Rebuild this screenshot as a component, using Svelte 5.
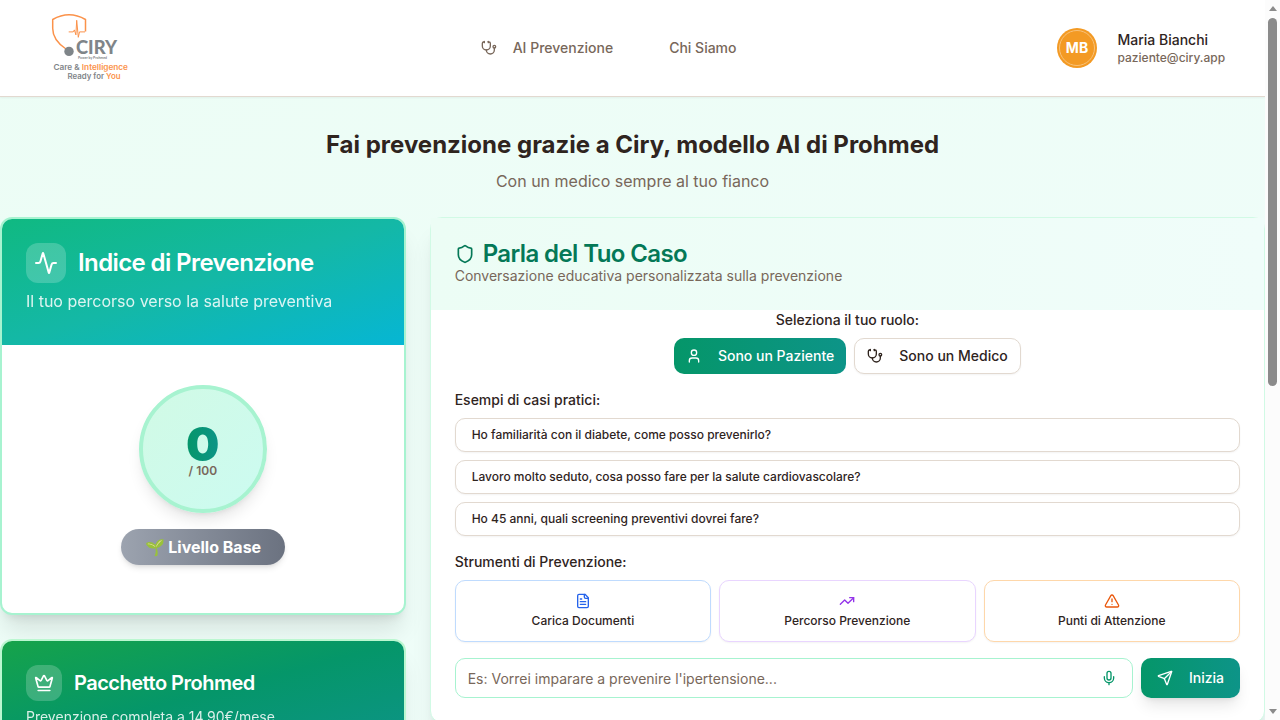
<script>
  const cases = [
    'Ho familiarità con il diabete, come posso prevenirlo?',
    'Lavoro molto seduto, cosa posso fare per la salute cardiovascolare?',
    'Ho 45 anni, quali screening preventivi dovrei fare?'
  ];
  const icons = {
    stethoscope: ['M11 2v2', 'M5 2v2', 'M5 3H4a2 2 0 0 0-2 2v4a6 6 0 0 0 12 0V5a2 2 0 0 0-2-2h-1', 'M8 15a6 6 0 0 0 12 0v-3', 'M22 10a2 2 0 1 1-4 0a2 2 0 1 1 4 0'],
    activity: ['M22 12h-2.48a2 2 0 0 0-1.93 1.46l-2.35 8.36a.25.25 0 0 1-.48 0L9.24 2.18a.25.25 0 0 0-.48 0l-2.35 8.36A2 2 0 0 1 4.49 12H2'],
    crown: ['M11.562 3.266a.5.5 0 0 1 .876 0L15.39 8.87a1 1 0 0 0 1.516.294L21.183 5.5a.5.5 0 0 1 .798.519l-2.834 10.246a1 1 0 0 1-.956.734H5.81a1 1 0 0 1-.957-.734L2.02 6.02a.5.5 0 0 1 .798-.519l4.276 3.664a1 1 0 0 0 1.516-.294z', 'M5 21h14'],
    shield: ['M20 13c0 5-3.5 7.5-7.66 8.95a1 1 0 0 1-.67-.01C7.5 20.5 4 18 4 13V6a1 1 0 0 1 1-1c2 0 4.5-1.2 6.24-2.72a1.17 1.17 0 0 1 1.52 0C14.51 3.81 17 5 19 5a1 1 0 0 1 1 1z'],
    user: ['M19 21v-2a4 4 0 0 0-4-4H9a4 4 0 0 0-4 4v2', 'M16 7a4 4 0 1 1-8 0a4 4 0 1 1 8 0'],
    file: ['M15 2H6a2 2 0 0 0-2 2v16a2 2 0 0 0 2 2h12a2 2 0 0 0 2-2V7Z', 'M14 2v4a2 2 0 0 0 2 2h4', 'M10 9H8', 'M16 13H8', 'M16 17H8'],
    trend: ['M22 7 13.5 15.5 8.5 10.5 2 17', 'M16 7h6v6'],
    alert: ['m21.73 18-8-14a2 2 0 0 0-3.48 0l-8 14A2 2 0 0 0 4 21h16a2 2 0 0 0 1.73-3', 'M12 9v4', 'M12 17h.01'],
    mic: ['M12 2a3 3 0 0 0-3 3v7a3 3 0 0 0 6 0V5a3 3 0 0 0-3-3Z', 'M19 10v2a7 7 0 0 1-14 0v-2', 'M12 19v3'],
    send: ['M14.536 21.686a.5.5 0 0 0 .937-.024l6.5-19a.496.496 0 0 0-.635-.635l-19 6.5a.5.5 0 0 0-.024.937l7.93 3.18a2 2 0 0 1 1.112 1.11z', 'm21.854 2.147-10.94 10.939']
  };
  const tools = [
    { icon: 'file', label: 'Carica Documenti', tone: 'blue' },
    { icon: 'trend', label: 'Percorso Prevenzione', tone: 'purple' },
    { icon: 'alert', label: 'Punti di Attenzione', tone: 'orange' }
  ];
</script>

{#snippet icon(name, size)}
  <svg class="icon" width={size} height={size} viewBox="0 0 24 24" aria-hidden="true">
    {#each icons[name] as d}<path {d} />{/each}
  </svg>
{/snippet}

<div class="window">
  <div class="page">
    <header class="topbar">
      <svg class="logo" width="82" height="72" viewBox="0 0 82 72" role="img" aria-label="Ciry">
        <path class="outline" d="M18 37C10.500 32 4.700 25.500 4.700 16.500V7.500Q21 -1.800 37.500 7.500V19.500" />
        <path class="pulse" d="M20.700 19.900h4.500l1.200-2 1.500 5L28.700 8.300 30.300 25.300 31.500 19.900h5.500" />
        <circle cx="21" cy="39.400" r="4.700" />
        <text class="brand" x="28" y="42" textLength="41" lengthAdjust="spacingAndGlyphs">CIRY</text>
        <text class="tiny" x="30" y="47" textLength="29" lengthAdjust="spacingAndGlyphs">Power by Prohmed</text>
        <text class="tag" x="5.500" y="57.500" textLength="74.500" lengthAdjust="spacingAndGlyphs">Care &amp; <tspan>Intelligence</tspan></text>
        <text class="tag" x="19.500" y="67" textLength="53" lengthAdjust="spacingAndGlyphs">Ready for <tspan>You</tspan></text>
      </svg>
      <nav>
        <a href="#ai">{@render icon('stethoscope', 16)}AI Prevenzione</a>
        <a href="#chi">Chi Siamo</a>
      </nav>
      <div class="account">
        <div class="avatar"><span>MB</span></div>
        <div class="who">
          <b>Maria Bianchi</b>
          <span>paziente@ciry.app</span>
        </div>
      </div>
    </header>

    <section class="hero">
      <h1>Fai prevenzione grazie a Ciry, modello AI di Prohmed</h1>
      <p>Con un medico sempre al tuo fianco</p>
    </section>

    <main>
      <aside>
        <article class="card index">
          <div class="card-head">
            <div class="title"><i>{@render icon('activity', 24)}</i><h2>Indice di Prevenzione</h2></div>
            <p>Il tuo percorso verso la salute preventiva</p>
          </div>
          <div class="score">
            <div class="ring"><strong>0</strong><span>/ 100</span></div>
            <div class="level">🌱 Livello Base</div>
          </div>
        </article>
        <article class="card pack">
          <div class="card-head">
            <div class="title"><i>{@render icon('crown', 20)}</i><h2>Pacchetto Prohmed</h2></div>
            <p>Prevenzione completa a 14,90€/mese</p>
          </div>
        </article>
      </aside>

      <section class="chat">
        <div class="chat-head">
          <h2>{@render icon('shield', 20)}Parla del Tuo Caso</h2>
          <p>Conversazione educativa personalizzata sulla prevenzione</p>
        </div>
        <div class="chat-body">
          <div class="label center">Seleziona il tuo ruolo:</div>
          <div class="roles">
            <button class="primary">{@render icon('user', 16)}Sono un Paziente</button>
            <button class="plain">{@render icon('stethoscope', 16)}Sono un Medico</button>
          </div>
          <div class="label">Esempi di casi pratici:</div>
          <div class="cases">
            {#each cases as text}<button>{text}</button>{/each}
          </div>
          <div class="label">Strumenti di Prevenzione:</div>
          <div class="tools">
            {#each tools as t}
              <button class={t.tone}>{@render icon(t.icon, 16)}<span>{t.label}</span></button>
            {/each}
          </div>
          <div class="ask">
            <div class="field"><span>Es: Vorrei imparare a prevenire l'ipertensione...</span>{@render icon('mic', 16)}</div>
            <button class="primary send">{@render icon('send', 16)}Inizia</button>
          </div>
        </div>
      </section>
    </main>
  </div>

  <div class="scrollbar"><i class="up"></i><i class="thumb"></i><i class="down"></i></div>
</div>

<style>
  :global(body) { margin: 0; overflow: hidden; }
  .window, .window :global(*) { box-sizing: border-box; }
  .window {
    display: flex;
    width: 1280px;
    height: 720px;
    overflow: hidden;
    font-family: Inter, sans-serif;
    color: #2f241e;
    font-size: 14px;
    line-height: 20px;
  }
  h1, h2, p { margin: 0; }
  button {
    font: 500 14px/20px Inter, sans-serif;
    color: inherit;
    margin: 0;
    padding: 0;
    border: 1px solid #e2d9d0;
    border-radius: 10px;
    background: #fff;
  }
  .icon {
    flex: none;
    fill: none;
    stroke: currentColor;
    stroke-width: 2;
    stroke-linecap: round;
    stroke-linejoin: round;
  }
  .page {
    width: 1265px;
    height: 720px;
    overflow: hidden;
    background: linear-gradient(to bottom right, #ecfdf5, #f0fdfa);
  }

  .topbar {
    height: 97px;
    display: grid;
    grid-template-columns: 432.700px 1fr 208px;
    align-items: center;
    padding-left: 48px;
    background: #fff;
    border-bottom: 1px solid #e2d9d0;
    box-shadow: 0 1px 2px rgba(0, 0, 0, .05);
  }
  .logo { display: block; font-family: Lato, sans-serif; font-weight: 700; }
  .logo path { fill: none; stroke: #fb924a; stroke-width: 1.500; stroke-linejoin: round; }
  .logo .pulse { stroke-width: 1; }
  .logo circle, .logo text { fill: #7f8589; }
  .logo tspan { fill: #fb924a; }
  .brand { font-size: 18.500px; font-weight: 900; }
  .tiny { font-size: 3.500px; }
  .tag { font-family: Inter, sans-serif; font-size: 7.500px; font-weight: 600; }
  nav { display: flex; gap: 56px; }
  nav a {
    display: flex;
    align-items: center;
    gap: 16px;
    font-weight: 500;
    color: #78675a;
    text-decoration: none;
  }
  .account { display: flex; align-items: center; gap: 20.500px; }
  .avatar { width: 40px; height: 40px; padding: 2px; border-radius: 50%; background: #f39a24; }
  .avatar span {
    display: flex;
    align-items: center;
    justify-content: center;
    height: 36px;
    border: 1px solid #f8c27b;
    border-radius: 50%;
    color: #fff;
    font-weight: 700;
  }
  .who b { display: block; font-weight: 500; }
  .who span { display: block; font-size: 12px; line-height: 16px; font-weight: 500; color: #78675a; }

  .hero { padding: 32px 0 24px; text-align: center; }
  .hero h1 { font-size: 24px; line-height: 32px; font-weight: 700; }
  .hero p { margin-top: 8px; font-size: 16px; line-height: 24px; color: #78675a; }

  main {
    display: grid;
    grid-template-columns: 405.670px 1fr;
    gap: 24px;
    align-items: start;
  }
  aside { display: flex; flex-direction: column; gap: 24px; }
  .card {
    overflow: hidden;
    border: 2px solid #a7f3d0;
    border-radius: 12px;
    background: #fff;
    box-shadow: 0 20px 25px -5px rgba(0, 0, 0, .1), 0 8px 10px -6px rgba(0, 0, 0, .1);
  }
  .card-head { padding: 24px; color: #fff; }
  .title { display: flex; align-items: center; gap: 12px; }
  .title i {
    display: grid;
    place-items: center;
    width: 40px;
    height: 40px;
    border-radius: 12px;
    background: rgba(255, 255, 255, .2);
  }
  .title h2 { font-size: 24px; line-height: 24px; font-weight: 600; letter-spacing: -.6px; }
  .card-head p { margin-top: 6px; font-size: 16px; line-height: 24px; opacity: .85; }
  .index { height: 398px; }
  .index .card-head { height: 126px; background: linear-gradient(to bottom right, #10b981, #14b8a6 50%, #06b6d4); }
  .score { display: flex; flex-direction: column; align-items: center; gap: 16px; padding-top: 40px; }
  .ring {
    display: flex;
    flex-direction: column;
    align-items: center;
    justify-content: center;
    width: 128px;
    height: 128px;
    border: 4px solid #a7f3d0;
    border-radius: 50%;
    background: linear-gradient(to bottom right, #d1fae5, #ccfbf1);
    box-shadow: 0 10px 15px -3px rgba(0, 0, 0, .1), 0 4px 6px -4px rgba(0, 0, 0, .1);
  }
  .ring strong {
    font-size: 47px;
    line-height: 46px;
    padding-top: 3px;
    font-weight: 900;
    color: transparent;
    background: linear-gradient(to right, #059669, #0d9488);
    background-clip: text;
  }
  .ring span { font-size: 12px; line-height: 12px; font-weight: 600; color: #78675a; margin: -2px 0 3px; }
  .level {
    height: 36px;
    width: 164px;
    text-align: center;
    border-radius: 18px;
    font-size: 16px;
    line-height: 36px;
    font-weight: 700;
    white-space: nowrap;
    color: #fff;
    background: linear-gradient(to right, #9ca3af, #6b7280);
    box-shadow: 0 4px 6px -1px rgba(0, 0, 0, .1), 0 2px 4px -2px rgba(0, 0, 0, .1);
  }
  .pack { height: 400px; border-color: #bbf7d0; }
  .pack .card-head { height: 106px; background: linear-gradient(to bottom right, #16a34a, #059669, #0d9488); }
  .pack .title i { width: 36px; height: 36px; }
  .pack .title h2 { font-size: 20px; letter-spacing: -.5px; }
  .pack p { font-size: 14px; line-height: 20px; }

  .chat {
    height: 506px;
    border: 1px solid #d1fae5;
    border-radius: 12px;
    background: #fff;
    box-shadow: 0 20px 25px -5px rgba(0, 0, 0, .1), 0 8px 10px -6px rgba(0, 0, 0, .1);
  }
  .chat-head { height: 92px; padding: 24px; background: linear-gradient(to right, #ecfdf5, #f0fdfa); }
  .chat-head h2 {
    display: flex;
    align-items: center;
    gap: 8px;
    font-size: 24px;
    line-height: 24px;
    font-weight: 600;
    letter-spacing: -.6px;
    color: #047857;
  }
  .chat-head p { color: #78675a; }
  .chat-body { padding: 0 24px; }
  .label { font-weight: 500; margin: 16px 0 8px; }
  .label.center { margin-top: 0; text-align: center; }
  .roles { display: flex; justify-content: center; gap: 8px; }
  .roles button { display: flex; align-items: center; gap: 16px; height: 36px; padding: 0 12px; }
  .plain, .cases button, .tools button { box-shadow: 0 1px 2px rgba(0, 0, 0, .05); }
  .primary { border: 0; color: #fff; background: linear-gradient(to right, #059669, #0d9488); }
  .cases { display: flex; flex-direction: column; gap: 8px; }
  .cases button { height: 34px; padding: 0 16px; font-size: 12px; line-height: 16px; text-align: left; }
  .tools { display: grid; grid-template-columns: repeat(3, 1fr); gap: 8px; }
  .tools button {
    display: flex;
    flex-direction: column;
    align-items: center;
    gap: 4px;
    height: 62px;
    padding-top: 12px;
    font-size: 12px;
    line-height: 16px;
  }
  .tools .blue { border-color: #bfdbfe; }
  .tools .purple { border-color: #e9d5ff; }
  .tools .orange { border-color: #fed7aa; }
  .blue .icon { color: #2563eb; }
  .purple .icon { color: #9333ea; }
  .orange .icon { color: #ea580c; }
  .ask { display: flex; gap: 8px; margin-top: 16px; }
  .field {
    flex: 1;
    display: flex;
    align-items: center;
    justify-content: space-between;
    height: 40px;
    padding: 0 15px 0 12px;
    border: 1px solid #a7f3d0;
    border-radius: 10px;
    color: #78675a;
  }
  .field span { padding-top: 2px; }
  .field .icon { color: #059669; }
  .send {
    display: flex;
    align-items: center;
    gap: 16px;
    height: 40px;
    padding: 0 16px;
    box-shadow: 0 10px 15px -3px rgba(0, 0, 0, .1), 0 4px 6px -4px rgba(0, 0, 0, .1);
  }

  .scrollbar {
    display: flex;
    flex-direction: column;
    align-items: center;
    width: 15px;
    padding: 6px 0;
    background: #fcfcfc;
  }
  .up, .down { border: 4.500px solid transparent; }
  .up { border-top: 0; border-bottom: 5px solid #8b8b8b; }
  .down { border-bottom: 0; border-top: 5px solid #8b8b8b; margin-top: auto; }
  .thumb { width: 9px; height: 368px; margin-top: 7px; border-radius: 5px; background: #8b8b8b; }
</style>
